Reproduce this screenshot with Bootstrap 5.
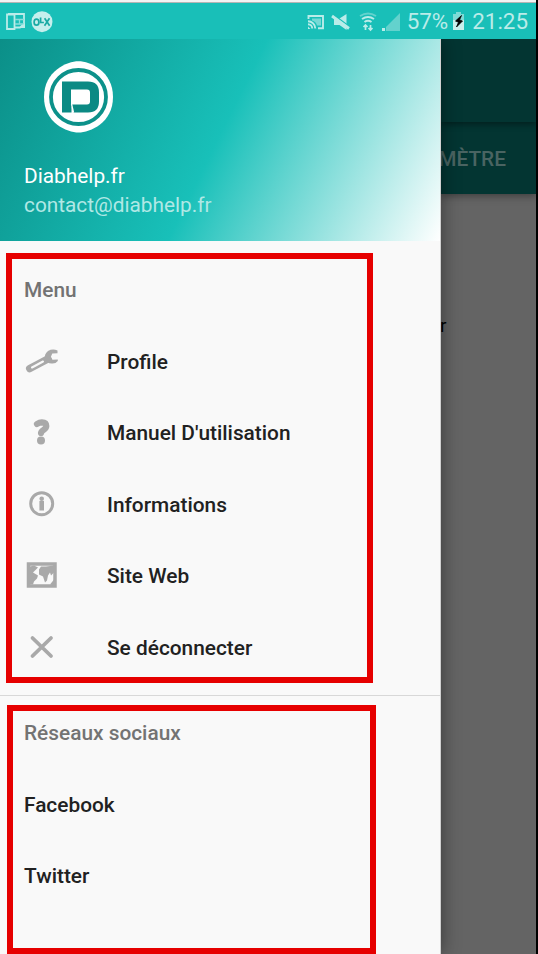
<!DOCTYPE html>
<html lang="fr">
<head>
<meta charset="utf-8">
<meta name="viewport" content="width=device-width, initial-scale=1">
<title>Diabhelp</title>
<link href="https://cdn.jsdelivr.net/npm/bootstrap@5.3.0/dist/css/bootstrap.min.css" rel="stylesheet">
<style>
body{font-family:Roboto,"Liberation Sans",sans-serif;background:#000;font-size:20.85px;line-height:24px}
.screen{width:536px;height:954px;background:#646464}
.status{height:39px;background:#19bfb8;border-top:2px solid #f3f3f3;color:#baece9;font-size:22.4px;box-shadow:inset 0 1px #b5b5b5;z-index:3}
.status svg{display:block;flex:none}
.percent{margin-left:1px}
.clock{margin:0 8px 0 6px}
.drawer{width:441px;background:#f9f9f9;box-shadow:0 0 18px rgba(0,0,0,.45);border-right:1px solid #d0d0d0;z-index:2}
.drawer-head{height:202px;background:linear-gradient(116.3deg,#0b8f88 0%,#18c0b9 49.5%,#fff 100%);padding:20px 24px 0 24px}
.logo{margin-left:19px}
.account{padding-top:29px}
.mail{color:#b0e8e5;margin-top:5px;font-size:20.8px}
.box{border:6px solid #e60000}
.box-menu{margin:12px 67px 0 6px;height:430px;padding-left:12px}
.box-social{margin:9px 64px 0 7px;height:249px;padding-left:11px}
.heading{color:#737373;font-weight:500}
.box-menu .heading{height:67px;padding-top:19px}
.box-social .heading{height:58px;padding-top:10px}
.entry{height:71.5px;color:#212121;font-weight:500}
.entry svg{width:36px;height:36px;margin-right:47px;flex:none;overflow:visible}
.rule{height:1px;background:#d8d8d8;margin-top:12px}
.backdrop{background:#646464;color:#000;min-width:0}
.appbar{height:83px;background:#033532;box-shadow:0 2px 7px rgba(0,0,0,.45);z-index:1}
.tabs{height:72px;background:#033532;color:#4a6462;box-shadow:0 2px 8px rgba(0,0,0,.4);font-weight:500;padding:2px 30px 0 0}
.letter{margin-top:120px;line-height:24px;font-size:19px;margin-left:-1px}
</style>
</head>
<body>
<div class="screen d-flex flex-column overflow-hidden">
  <header class="status d-flex align-items-center flex-shrink-0 position-relative">
    <svg width="60" height="36" viewBox="0 2 60 36" fill="none">
      <path d="M7 13.500h7.500v14.500H7z" stroke="#baece9" stroke-width="1.800"/>
      <path d="M8 13h16v10l-4 3.500h-5" stroke="#baece9" stroke-width="1.800"/>
      <path d="M15 18.500h9M19.500 18.500v5M15 23h9" stroke="#8adfdb" stroke-width="1.300"/>
      <path d="M25 22v5h-5z" fill="#baece9"/>
      <circle cx="42" cy="20.700" r="10.500" fill="#c5efed"/>
      <ellipse cx="36.500" cy="21.200" rx="2.400" ry="3" stroke="#19aaa4" stroke-width="1.700"/>
      <path d="M40.600 16.500v5h3.300M44.600 17.200l5 7.500M49.500 17.200l-5 7.500" stroke="#19aaa4" stroke-width="1.700"/>
    </svg>
    <svg class="ms-auto" width="101" height="36" viewBox="304 2 101 36" fill="none">
      <path d="M311 17.500h9v7h-4q-1-4-5-5z" fill="#76d9d5"/>
      <g stroke="#baece9" stroke-width="1.900">
        <path d="M307.500 18v-3h14.500v12.300h-5"/>
        <path d="M307 20.200a7.300 7.300 0 0 1 7.300 7.300M307 23.300a4.200 4.200 0 0 1 4.200 4.200"/>
      </g>
      <path d="M307 25.500v2.500h2.500z" fill="#baece9"/>
      <path d="M333 17.500h5.500l7-4.500v16l-7-5H333z" fill="#baece9"/>
      <path d="M332 13.300l17 12.800" stroke="#19bfb8" stroke-width="1.500"/>
      <path d="M331 15l17 12.500" stroke="#baece9" stroke-width="2.800"/>
      <path d="M359 15q8-5 16 0" stroke="#63d2cd" stroke-width="2"/>
      <path d="M361 18q6-4 12 0M363.500 21q3.500-2.500 7 0" stroke="#baece9" stroke-width="2"/>
      <path d="M364.500 29v-5M362.500 26l2-2 2 2M369.500 24v5M367.500 27l2 2 2-2" stroke="#baece9" stroke-width="1.700"/>
      <path d="M399 12v18h-14v-4z" fill="#63d2cd"/><path d="M381 30v-3h3v3z" fill="#baece9"/>
    </svg>
    <span class="percent">57%</span>
    <svg class="ms-1" width="14" height="20" viewBox="0 0 14 20"><path d="M1 3h3V1h5v2h3v16H1z" fill="#c9efec"/><path d="M1 3h3V1h5v2h3v6H1z" fill="#7edbd6"/><path d="M9.500 4.500L3.500 10l3 1.200L4.500 16l6-6-3-1z" fill="#000" stroke="#000" stroke-width=".8"/></svg>
    <span class="clock">21:25</span>
  </header>
  <div class="d-flex flex-grow-1">
    <aside class="drawer flex-shrink-0 position-relative">
      <div class="drawer-head">
        <svg class="logo d-block" width="72" height="76" viewBox="43 59 72 76">
          <path d="M78.500 61.200C90 61.200 113 71 113 97s-23 35.500-34.500 35.500S44 123 44 97s23-35.800 34.500-35.800z" fill="#fff"/>
          <ellipse cx="78.500" cy="97" rx="27.500" ry="27" fill="none" stroke="#0c918a" stroke-width="3.800"/>
          <path d="M62 81.500h26q11 0 11 11v9q0 11-11 11H73.500l-2-6.500v6.500H62z" fill="#0b8a84"/>
          <path d="M71 89.500h16q3 0 3 3v9q0 3-3 3H71z" fill="#fff"/>
          <path d="M71.500 104l2 8.500" stroke="#fff" stroke-width="1.300"/>
        </svg>
        <div class="account text-white">Diabhelp.fr</div>
        <div class="mail">contact@diabhelp.fr</div>
      </div>
      <nav class="box box-menu">
        <div class="heading">Menu</div>
        <div class="entry d-flex align-items-center">
          <svg viewBox="24 344 36 36" fill="none"><path d="M29.800 368.500l18-9.500" stroke="#a9a9a9" stroke-width="7.600" stroke-linecap="round"/><path d="M57.500 350.500q-5-2-9.500.5-4 3-3 8 2 4.500 6.500 4.500 4 .5 6.300-2.500v-1.500l-5.300.3-1.700-2.800 1.500-3.500 5.200-.3z" fill="#a9a9a9"/><path d="M32 367.500l11-6" stroke="#f9f9f9" stroke-width="2" stroke-linecap="round"/></svg>
          <span>Profile</span>
        </div>
        <div class="entry d-flex align-items-center">
          <svg viewBox="24 415.500 36 36" fill="none"><path d="M37 424.500q2.500-1.700 4.800-1.700 4.500.2 4.500 3.700 0 2-2.800 4-2.500 1.800-2.500 3" stroke="#a9a9a9" stroke-width="6.200" stroke-linecap="round" stroke-linejoin="round"/><circle cx="41" cy="441" r="4" fill="#a9a9a9"/></svg>
          <span>Manuel D'utilisation</span>
        </div>
        <div class="entry d-flex align-items-center">
          <svg viewBox="24 487 36 36" fill="none"><circle cx="41.700" cy="503.700" r="11" stroke="#a9a9a9" stroke-width="3"/><circle cx="41.700" cy="498.800" r="2.300" fill="#a9a9a9"/><path d="M41.700 501v9.500" stroke="#a9a9a9" stroke-width="4.600"/></svg>
          <span>Informations</span>
        </div>
        <div class="entry d-flex align-items-center">
          <svg viewBox="24 558.500 36 36" fill="none"><path d="M28.500 564.500h26.500v22h-26.500z" stroke="#a9a9a9" stroke-width="3.500"/><path d="M30 567l4-1 4 2-3 3-2 2 5 3-1 3-3 3-1 3h-3zM39 570l2-3h5l8-1v7l-3 3-1-3-2 3-1 5-2 2-2-6-4-2zM50 585l4-5v6z" fill="#a9a9a9"/></svg>
          <span>Site Web</span>
        </div>
        <div class="entry d-flex align-items-center">
          <svg viewBox="24 630 36 36" fill="none"><path d="M32.500 638l18.500 18M51 638l-18.500 18" stroke="#a9a9a9" stroke-width="3.800" stroke-linecap="round"/></svg>
          <span>Se déconnecter</span>
        </div>
      </nav>
      <div class="rule"></div>
      <nav class="box box-social">
        <div class="heading">Réseaux sociaux</div>
        <div class="entry d-flex align-items-center">Facebook</div>
        <div class="entry d-flex align-items-center">Twitter</div>
      </nav>
    </aside>
    <main class="backdrop flex-grow-1 d-flex flex-column">
      <div class="appbar position-relative"></div>
      <div class="tabs d-flex align-items-center justify-content-end">MÈTRE</div>
      <div class="letter">r</div>
    </main>
  </div>
</div>
<script src="https://cdn.jsdelivr.net/npm/bootstrap@5.3.0/dist/js/bootstrap.bundle.min.js"></script>
</body>
</html>
